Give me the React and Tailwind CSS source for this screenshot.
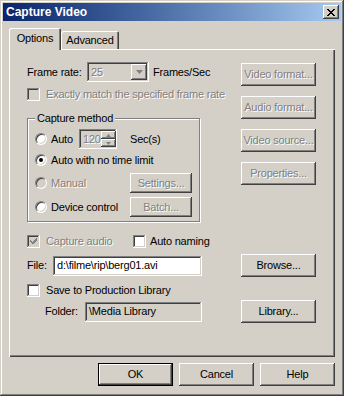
import clsx from "clsx";

const raised =
  "shadow-[inset_-1px_-1px_#404040,inset_1px_1px_#ffffff,inset_-2px_-2px_#808080,inset_2px_2px_#d4d0c8]";
const sunken =
  "shadow-[inset_-1px_-1px_#ffffff,inset_1px_1px_#808080,inset_-2px_-2px_#d4d0c8,inset_2px_2px_#404040]";
const dimText = "text-[#808080] [text-shadow:1px_1px_0_#ffffff]";

function Btn({ children, disabled, def, className }) {
  return (
    <div
      className={clsx(
        "flex items-center justify-center bg-[#d4d0c8] shrink-0",
        raised,
        def && "border border-black",
        disabled && dimText,
        className || "w-[75px] h-[23px]"
      )}
    >
      {children}
    </div>
  );
}

function Check({ checked, disabled }) {
  return (
    <div
      className={clsx(
        "w-[13px] h-[13px] shrink-0 relative",
        sunken,
        disabled ? "bg-[#d4d0c8]" : "bg-white"
      )}
    >
      {checked && (
        <svg width="13" height="13" viewBox="0 0 13 13" className="absolute inset-0">
          <path
            d="M3 5h1v1h1v1h1V6h1V5h1V4h1V3h1v3h-1v1h-1v1h-1v1h-1v1H6V9H5V8H4V7H3z"
            fill={disabled ? "#808080" : "#000000"}
          />
        </svg>
      )}
    </div>
  );
}

function Radio({ checked, disabled }) {
  return (
    <div
      className={clsx(
        "w-[12px] h-[12px] rounded-full shrink-0 flex items-center justify-center",
        "border border-t-[#808080] border-l-[#808080] border-r-white border-b-white",
        "shadow-[inset_1px_1px_#404040,inset_-1px_-1px_#d4d0c8]",
        disabled ? "bg-[#d4d0c8]" : "bg-white"
      )}
    >
      {checked && <div className="w-[4px] h-[4px] rounded-full bg-black" />}
    </div>
  );
}

function DownArrow({ color = "#000", w = 7 }) {
  return (
    <svg width={w} height="4" viewBox={`0 0 ${w} 4`}>
      <polygon points={`0,0 ${w},0 ${w / 2},4`} fill={color} />
    </svg>
  );
}

export default function App() {
  return (
    <div className="w-[344px] h-[396px] bg-[#d4d0c8] p-[3px] flex flex-col font-['Liberation_Sans',Arial,sans-serif] text-[11px] leading-[13px] tracking-[-0.2px] text-black shadow-[inset_-1px_-1px_#404040,inset_1px_1px_#d4d0c8,inset_-2px_-2px_#808080,inset_2px_2px_#ffffff]">
      {/* Title bar */}
      <div className="h-[18px] flex items-center justify-between bg-gradient-to-r from-[#0a246a] to-[#a6caf0] pl-[3px] pr-[2px]">
        <span className="text-white font-bold text-[12px] tracking-normal">Capture Video</span>
        <div className={clsx("w-[16px] h-[14px] bg-[#d4d0c8] flex items-center justify-center", raised)}>
          <svg width="8" height="7" viewBox="0 0 8 7">
            <path
              d="M0 0h2v1h1v1h2V1h1V0h2v1H7v1H6v1H5v1h1v1h1v1h1v1H6V6H5V5H3v1H2v1H0V6h1V5h1V4h1V3H2V2H1V1H0z"
              fill="#000"
            />
          </svg>
        </div>
      </div>

      {/* Tabs */}
      <div className="mt-[7px] ml-[6px] h-[21px] flex items-start">
        <div className="relative z-10 w-[52px] h-[22px] bg-[#d4d0c8] flex items-center justify-center pb-[1px] rounded-t-[2px] shadow-[inset_1px_1px_#ffffff,inset_-1px_0_#404040,inset_-2px_0_#808080]">
          Options
        </div>
        <div className="mt-[3px] w-[58px] h-[18px] flex items-center justify-center rounded-t-[2px] shadow-[inset_1px_1px_#ffffff,inset_-1px_0_#404040,inset_-2px_0_#808080]">
          Advanced
        </div>
      </div>

      {/* Tab panel */}
      <div className="ml-[6px] w-[326px] h-[308px] pt-[13px] pl-[18px] flex flex-col shadow-[inset_1px_1px_#ffffff,inset_-1px_-1px_#404040,inset_-2px_-2px_#808080]">
        <div className="flex">
          <div className="w-[214px] flex flex-col">
            <div className="h-[20px] flex items-center">
              <span className="w-[60px]">Frame rate:</span>
              <div className={clsx("w-[62px] h-[20px] bg-[#d4d0c8] flex items-center justify-between pl-[4px] pr-[2px]", sunken)}>
                <span className={dimText}>25</span>
                <div className={clsx("w-[16px] h-[16px] flex items-center justify-center", raised)}>
                  <DownArrow color="#808080" />
                </div>
              </div>
              <span className="ml-[4px]">Frames/Sec</span>
            </div>

            <div className="mt-[6px] h-[13px] flex items-center gap-[6px]">
              <Check disabled />
              <span className={dimText}>Exactly match the specified frame rate</span>
            </div>

            <div className="mt-[17px] relative w-[173px] h-[104px] pt-[11px] pl-[8px] pr-[8px] flex flex-col shadow-[inset_1px_1px_#808080,inset_-1px_-1px_#808080,inset_2px_2px_#ffffff,1px_1px_#ffffff]">
              <span className="absolute left-[8px] -top-[6px] px-[2px] bg-[#d4d0c8]">Capture method</span>

              <div className="h-[20px] flex items-center">
                <Radio />
                <span className="ml-[4px] w-[28px]">Auto</span>
                <div className={clsx("w-[38px] h-[20px] bg-[#d4d0c8] flex items-center justify-between pl-[4px] pr-[2px]", sunken)}>
                  <span className={dimText}>120</span>
                  <div className="flex flex-col">
                    <div className={clsx("w-[15px] h-[8px] flex items-center justify-center", raised)}>
                      <svg width="5" height="3" viewBox="0 0 5 3"><polygon points="0,3 5,3 2.5,0" fill="#808080" /></svg>
                    </div>
                    <div className={clsx("w-[15px] h-[8px] flex items-center justify-center", raised)}>
                      <svg width="5" height="3" viewBox="0 0 5 3"><polygon points="0,0 5,0 2.5,3" fill="#808080" /></svg>
                    </div>
                  </div>
                </div>
                <span className="ml-[13px]">Sec(s)</span>
              </div>

              <div className="mt-[1px] h-[20px] flex items-center">
                <Radio checked />
                <span className="ml-[4px]">Auto with no time limit</span>
              </div>

              <div className="mt-[3px] h-[20px] flex items-center justify-between">
                <div className="flex items-center">
                  <Radio disabled />
                  <span className={clsx("ml-[4px]", dimText)}>Manual</span>
                </div>
                <Btn disabled className="w-[62px] h-[20px]">Settings...</Btn>
              </div>

              <div className="mt-[4px] h-[20px] flex items-center justify-between">
                <div className="flex items-center">
                  <Radio />
                  <span className="ml-[4px]">Device control</span>
                </div>
                <Btn disabled className="w-[62px] h-[20px]">Batch...</Btn>
              </div>
            </div>
          </div>

          <div className="pt-[1px] flex flex-col gap-[10px]">
            <Btn disabled>Video format...</Btn>
            <Btn disabled>Audio format...</Btn>
            <Btn disabled>Video source...</Btn>
            <Btn disabled>Properties...</Btn>
          </div>
        </div>

        <div className="mt-[13px] h-[13px] flex items-center">
          <div className="w-[106px] flex items-center gap-[6px]">
            <Check checked disabled />
            <span className={dimText}>Capture audio</span>
          </div>
          <Check />
          <span className="ml-[4px]">Auto naming</span>
        </div>

        <div className="mt-[6px] h-[23px] flex items-center">
          <div className="w-[214px] flex items-center">
            <span className="w-[26px]">File:</span>
            <div className={clsx("w-[149px] h-[20px] bg-white flex items-center pl-[4px]", sunken)}>
              d:\filme\rip\berg01.avi
            </div>
          </div>
          <Btn>Browse...</Btn>
        </div>

        <div className="mt-[7px] h-[13px] flex items-center gap-[6px]">
          <Check />
          <span>Save to Production Library</span>
        </div>

        <div className="mt-[3px] h-[23px] flex items-center">
          <div className="w-[214px] pl-[18px] flex items-center">
            <span className="w-[40px]">Folder:</span>
            <div className={clsx("w-[117px] h-[20px] bg-[#d4d0c8] flex items-center pl-[4px]", sunken)}>
              \Media Library
            </div>
          </div>
          <Btn>Library...</Btn>
        </div>
      </div>

      {/* Dialog buttons */}
      <div className="mt-[6px] pr-[6px] flex justify-end gap-[6px]">
        <Btn def>OK</Btn>
        <Btn>Cancel</Btn>
        <Btn>Help</Btn>
      </div>
    </div>
  );
}
